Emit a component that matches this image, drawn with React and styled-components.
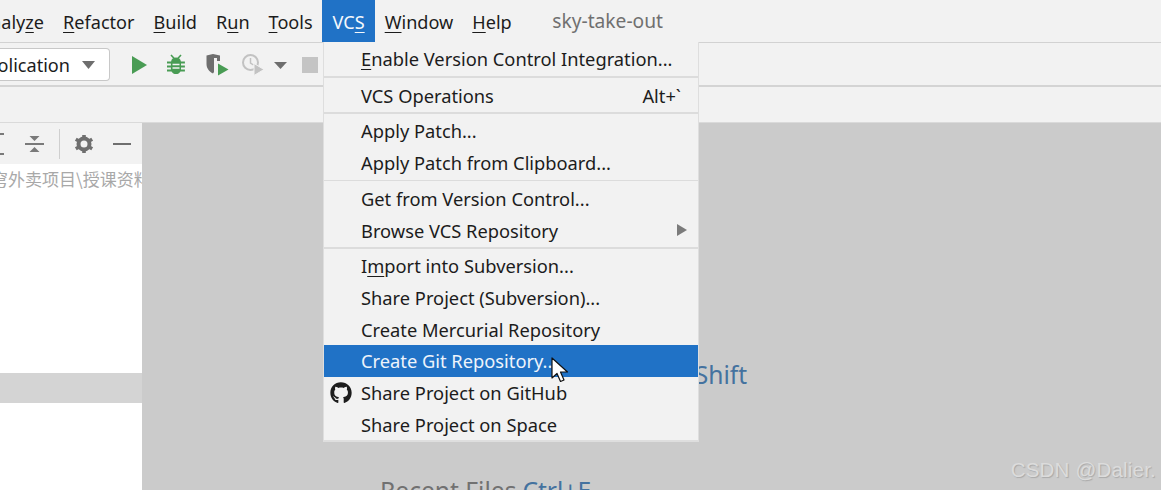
import React from "react";
import styled, { createGlobalStyle } from "styled-components";
import { FaGithub } from "react-icons/fa";

const Global = createGlobalStyle`
  html, body { margin: 0; padding: 0; background: #f2f2f2; }
  body { font-family: "Noto Sans", "Noto Sans CJK SC", sans-serif; }
`;

const Page = styled.div`
  position: relative;
  width: 1161px;
  height: 490px;
  overflow: hidden;
  display: flex;
  flex-direction: column;
  background: #f2f2f2;
  color: #1c1c1c;
`;

const MenuBar = styled.div`
  height: 42px;
  flex: none;
  display: flex;
  align-items: stretch;
  margin-left: -31px;
  border-bottom: 1px solid #d2d2d2;
  font-size: 18.1px;
`;

const MenuTitle = styled.div`
  display: flex;
  align-items: center;
  padding: 2px ${(p) => (p.$active ? 10.5 : 9.5)}px 0;
  white-space: nowrap;
  background: ${(p) => (p.$active ? "#2072c6" : "transparent")};
  color: ${(p) => (p.$active ? "#f4f8fc" : "#1c1c1c")};
`;

const Key = styled.span`
  text-decoration: underline;
  text-decoration-thickness: 1px;
  text-underline-offset: 3px;
`;

const ProjectName = styled.div`
  display: flex;
  align-items: center;
  margin-left: 31px;
  padding-bottom: 2px;
  color: #707070;
  font-size: 19.2px;
`;

const Toolbar = styled.div`
  height: 42px;
  flex: none;
  display: flex;
  align-items: center;
  border-bottom: 2px solid #d4d4d4;
`;

const RunConfig = styled.div`
  width: 110px;
  height: 33px;
  margin-top: 1px;
  box-sizing: border-box;
  display: flex;
  align-items: center;
  justify-content: flex-end;
  gap: 12px;
  padding-right: 14px;
  font-size: 18.1px;
  background: #fff;
  border: 1px solid #c8c8c8;
  border-left: none;
  border-radius: 0 4px 4px 0;
  overflow: hidden;
  white-space: nowrap;
`;

const ToolIcons = styled.div`
  display: flex;
  align-items: center;
  margin: 2px 0 0 21px;
`;

const Icon = styled.svg`
  display: block;
  flex: none;
  margin-left: ${(p) => p.$gap ?? 0}px;
`;

const NavBar = styled.div`
  height: 35px;
  flex: none;
  border-bottom: 1px solid #dadada;
`;

const Workspace = styled.div`
  flex: 1;
  min-height: 0;
  display: flex;
`;

const LeftPanel = styled.div`
  width: 142px;
  flex: none;
  background: #fff;
  display: flex;
  flex-direction: column;
  overflow: hidden;
`;

const PanelHeader = styled.div`
  height: 41px;
  flex: none;
  background: #f2f2f2;
  display: flex;
  align-items: center;
`;

const HeaderDivider = styled.div`
  width: 1px;
  height: 30px;
  margin-left: 14px;
  background: #cfcfcf;
`;

const PathText = styled.div`
  height: 29px;
  flex: none;
  margin-left: -26px;
  display: flex;
  align-items: center;
  white-space: nowrap;
  color: #a8a8a8;
  font-size: 17px;
  font-family: "Noto Sans CJK SC", sans-serif;
`;

const Selection = styled.div`
  height: 30px;
  flex: none;
  margin-top: 180px;
  background: #d4d4d4;
`;

const Editor = styled.div`
  flex: 1;
  background: #cbcbcb;
  padding: 235px 0 0 238px;
  display: flex;
  flex-direction: column;
  gap: 26px;
  overflow: hidden;
`;

const Hint = styled.div`
  height: 32px;
  flex: none;
  display: flex;
  align-items: center;
  gap: 6px;
  white-space: nowrap;
  font-size: 24.6px;
  color: #717171;
`;

const HintKey = styled.span`
  color: #44729f;
`;

const Dropdown = styled.div`
  position: absolute;
  left: 323px;
  top: 42px;
  width: 376px;
  box-sizing: border-box;
  background: #f2f2f2;
  border: 1px solid #dedede;
  border-top: none;
  border-bottom-width: 2px;
  display: flex;
  flex-direction: column;
  font-size: 18.3px;
  padding-top: 1px;
`;

const Group = styled.div`
  flex: none;
  height: ${(p) => p.$h}px;
  padding-top: ${(p) => p.$top ?? 0}px;
  padding-bottom: ${(p) => p.$bottom ?? 0}px;
  box-sizing: border-box;
  display: flex;
  flex-direction: column;
`;

const Separator = styled.div`
  flex: none;
  height: ${(p) => p.$h ?? 2}px;
  background: #dcdcdc;
`;

const Item = styled.div`
  position: relative;
  flex: 1;
  min-height: 0;
  display: flex;
  align-items: center;
  justify-content: space-between;
  padding: 0 17px 0 37px;
  white-space: nowrap;
  background: ${(p) => (p.$active ? "#2072c6" : "transparent")};
  color: ${(p) => (p.$active ? "#eef4fb" : "#1c1c1c")};
`;

const ItemIcon = styled.span`
  position: absolute;
  left: 6px;
  top: 50%;
  transform: translateY(-50%);
  display: flex;
  color: #1d1d1d;
`;

const Cursor = styled.svg`
  position: absolute;
  left: 551px;
  top: 357px;
`;

const Watermark = styled.div`
  position: absolute;
  right: 5px;
  top: 458px;
  font-family: "Liberation Sans", Arial, sans-serif;
  font-size: 20.5px;
  letter-spacing: 0.2px;
  color: #dcdcdc;
  text-shadow: 1px 1px 1px #a9a9a9;
`;

const Play = (p) => (
  <Icon width="17" height="20" viewBox="0 0 17 20" {...p}>
    <path d="M1 1 16 10 1 19Z" fill="#499c54" />
  </Icon>
);

const Bug = (p) => (
  <Icon width="20" height="22" viewBox="0 0 20 22" {...p}>
    <path d="M5 1l3 3.2M15 1l-3 3.2" stroke="#499c54" strokeWidth="1.6" fill="none" />
    <path
      d="M10 3.600c2.800 0 4.600 1.600 4.900 4h4v2h-3.900v2h3.900v2h-3.900v1.800h3.900v2h-4.400c-.9 1.600-2.500 2.600-4.500 2.600s-3.600-1-4.500-2.600H1v-2h3.900v-1.800H1v-2h3.900v-2H1v-2h4.100c.3-2.400 2.100-4 4.900-4Z"
      fill="#499c54"
    />
    <path d="M6.500 10.500h7M6.500 14h7" stroke="#f2f2f2" strokeWidth="1.400" />
  </Icon>
);

const Coverage = (p) => (
  <Icon width="24" height="24" viewBox="0 0 24 24" {...p}>
    <path
      d="M1.500 2.500 8 1l7 1.500v5.500h-3V5H9v14l-1 1.500C4 18.500 1.500 15 1.500 11Z"
      fill="#6e6e6e"
    />
    <path d="M13 10.500 23.500 16.500 13 22.500Z" fill="#499c54" />
  </Icon>
);

const Profiler = (p) => (
  <Icon width="24" height="24" viewBox="0 0 24 24" {...p}>
    <circle cx="9.500" cy="9.500" r="7.500" fill="none" stroke="#c2c2c2" strokeWidth="2" />
    <path d="M9.500 5v5l3 2" fill="none" stroke="#c2c2c2" strokeWidth="1.500" />
    <path d="M13 10.500 23 16.500 13 22.500Z" fill="#c2c2c2" stroke="#f2f2f2" strokeWidth="1" />
  </Icon>
);

const Caret = ({ color = "#6e6e6e", w = 13, h = 7, ...p }) => (
  <Icon width={w} height={h} viewBox="0 0 13 7" preserveAspectRatio="none" {...p}>
    <path d="M0 0h13L6.500 7Z" fill={color} />
  </Icon>
);

const Stop = (p) => (
  <Icon width="16" height="16" viewBox="0 0 16 16" {...p}>
    <rect width="16" height="16" fill="#c4c4c4" />
  </Icon>
);

const Expand = (p) => (
  <Icon width="20" height="20" viewBox="0 0 20 20" {...p}>
    <path d="M0 10h19" stroke="#7a7a7a" strokeWidth="2" />
    <path d="M4.500 2h10L9.500 7ZM4.500 18h10L9.500 13Z" fill="#7a7a7a" />
  </Icon>
);

const ExpandEdge = (p) => (
  <Icon width="5" height="24" viewBox="0 0 5 24" {...p}>
    <path d="M0 1h4v2H0ZM0 21h4v2H0Z" fill="#7a7a7a" />
  </Icon>
);

const Gear = (p) => (
  <Icon width="20" height="20" viewBox="0 0 20 20" {...p}>
    <circle cx="10" cy="10" r="5.500" fill="none" stroke="#6f6f6f" strokeWidth="4" />
    <path
      d="M10 1v3M10 16v3M1.800 5.300l2.700 1.500M15.500 13.200l2.700 1.500M1.800 14.700l2.700-1.500M15.500 6.800l2.700-1.500"
      stroke="#6f6f6f"
      strokeWidth="3.600"
    />
  </Icon>
);

const Minimize = (p) => (
  <Icon width="18" height="4" viewBox="0 0 18 4" {...p}>
    <rect y="1" width="18" height="2" fill="#6f6f6f" />
  </Icon>
);

const SubArrow = styled(({ className }) => (
  <svg className={className} width="11" height="12" viewBox="0 0 11 12">
    <path d="M0 0l10 6-10 6Z" fill="#7b7b7b" />
  </svg>
))`
  display: block;
  flex: none;
  margin-right: -7px;
`;

export default function App() {
  return (
    <Page>
      <Global />
      <MenuBar>
        <MenuTitle>
          <span>
            Analy<Key>z</Key>e
          </span>
        </MenuTitle>
        <MenuTitle>
          <span>
            <Key>R</Key>efactor
          </span>
        </MenuTitle>
        <MenuTitle>
          <span>
            <Key>B</Key>uild
          </span>
        </MenuTitle>
        <MenuTitle>
          <span>
            R<Key>u</Key>n
          </span>
        </MenuTitle>
        <MenuTitle>
          <span>
            <Key>T</Key>ools
          </span>
        </MenuTitle>
        <MenuTitle $active>
          <span>
            VC<Key>S</Key>
          </span>
        </MenuTitle>
        <MenuTitle>
          <span>
            <Key>W</Key>indow
          </span>
        </MenuTitle>
        <MenuTitle>
          <span>
            <Key>H</Key>elp
          </span>
        </MenuTitle>
        <ProjectName>sky-take-out</ProjectName>
      </MenuBar>
      <Toolbar>
        <RunConfig>
          <span>olication</span>
          <Caret w={13} h={8} />
        </RunConfig>
        <ToolIcons>
          <Play />
          <Bug $gap={18} />
          <Coverage $gap={19} />
          <Profiler $gap={12} />
          <Caret $gap={9} />
          <Stop $gap={15} />
        </ToolIcons>
      </Toolbar>
      <NavBar />
      <Workspace>
        <LeftPanel>
          <PanelHeader>
            <ExpandEdge />
            <Expand $gap={20} />
            <HeaderDivider />
            <Gear $gap={14} />
            <Minimize $gap={19} />
          </PanelHeader>
          <PathText>苍穹外卖项目\授课资料</PathText>
          <Selection />
        </LeftPanel>
        <Editor>
          <Hint>
            Search Everywhere <HintKey>Double Shift</HintKey>
          </Hint>
          <Hint>
            Go to File <HintKey>Ctrl+Shift+N</HintKey>
          </Hint>
          <Hint>
            Recent Files <HintKey>Ctrl+E</HintKey>
          </Hint>
        </Editor>
      </Workspace>
      <Dropdown>
        <Group $h={33} $bottom={2}>
          <Item>
            <span>
              <Key>E</Key>nable Version Control Integration...
            </span>
          </Item>
        </Group>
        <Separator />
        <Group $h={34}>
          <Item>
            <span>VCS Operations</span>
            <span>Alt+`</span>
          </Item>
        </Group>
        <Separator />
        <Group $h={66} $bottom={2}>
          <Item>Apply Patch...</Item>
          <Item>Apply Patch from Clipboard...</Item>
        </Group>
        <Separator $h={1} />
        <Group $h={66} $top={2} $bottom={1}>
          <Item>Get from Version Control...</Item>
          <Item>
            <span>Browse VCS Repository</span>
            <SubArrow />
          </Item>
        </Group>
        <Separator />
        <Group $h={191} $top={1}>
          <Item>
            <span>
              I<Key>m</Key>port into Subversion...
            </span>
          </Item>
          <Item>Share Project (Subversion)...</Item>
          <Item>Create Mercurial Repository</Item>
          <Item $active>Create Git Repository...</Item>
          <Item>
            <ItemIcon>
              <FaGithub size={22} />
            </ItemIcon>
            Share Project on GitHub
          </Item>
          <Item>Share Project on Space</Item>
        </Group>
      </Dropdown>
      <Cursor width="20" height="28" viewBox="0 0 20 28">
        <path
          d="M1 1v20l5-4.500 3.500 8 3.500-1.500-3.500-8h7Z"
          fill="#fff"
          stroke="#111"
          strokeWidth="1.200"
          strokeLinejoin="round"
        />
      </Cursor>
      <Watermark>CSDN @Dalier.</Watermark>
    </Page>
  );
}
